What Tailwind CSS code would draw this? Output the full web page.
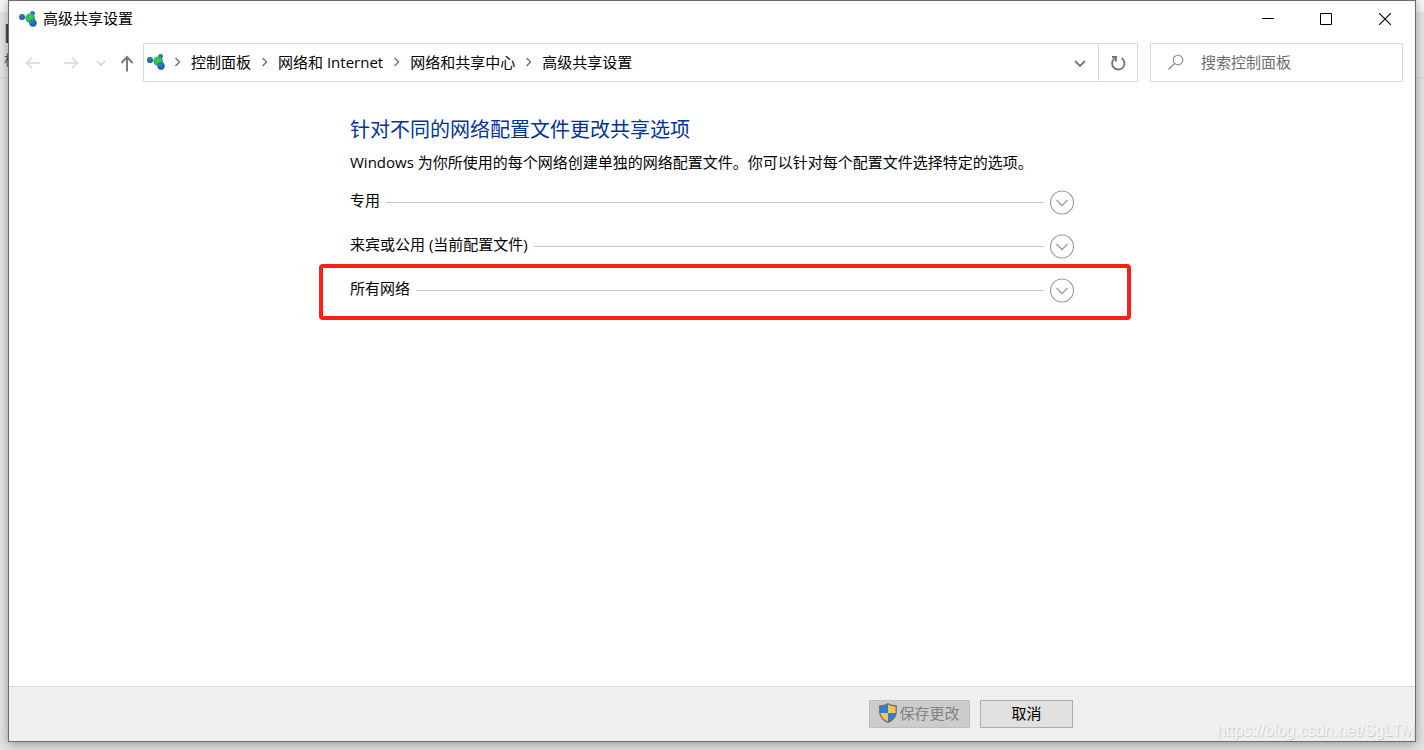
<!DOCTYPE html>
<html lang="zh-CN">
  <head>
    <meta charset="UTF-8" />
    <meta name="viewport" content="width=device-width, initial-scale=1.0" />
    <title>高级共享设置</title>
    <script src="https://cdn.jsdelivr.net/npm/@tailwindcss/browser@4"></script>
  </head>
  <body class="relative flex h-screen flex-col overflow-hidden bg-[#e2e3e5] px-2 pb-2 font-['Open_Sans','Noto_Sans_CJK_SC',sans-serif] text-[15px] leading-5 text-black">
    <svg class="absolute size-0" aria-hidden="true">
      <defs>
        <radialGradient id="blue" cx="40%" cy="35%" r="65%">
          <stop offset="0" stop-color="#2f83cc" />
          <stop offset="1" stop-color="#0f5ba6" />
        </radialGradient>
        <radialGradient id="green" cx="45%" cy="40%" r="65%">
          <stop offset="0" stop-color="#3fd04e" />
          <stop offset="1" stop-color="#27a94a" />
        </radialGradient>
        <symbol id="sharing" viewBox="0 0 18 16">
          <path d="M3 6 11 7" stroke="#b9d3de" stroke-width="1" fill="none" />
          <circle cx="3" cy="6" r="3" fill="url(#blue)" />
          <circle cx="13.5" cy="2.5" r="2.4" fill="url(#blue)" />
          <circle cx="11.2" cy="7.2" r="4.8" fill="url(#green)" />
          <circle cx="14" cy="12" r="3.7" fill="url(#blue)" />
        </symbol>
        <symbol id="chevron" viewBox="0 0 8 10">
          <path d="M1.5 1 5.5 5l-4 4" stroke="#777" stroke-width="1.5" fill="none" />
        </symbol>
        <symbol id="expand" viewBox="0 0 26 26">
          <circle cx="13" cy="13.5" r="11.5" stroke="#999" stroke-width="1.1" fill="#fff" />
          <path d="m7.5 11 5.5 5.500 5.500-5.500" stroke="#a8a8a8" stroke-width="1.7" fill="none" />
        </symbol>
      </defs>
    </svg>

    <!-- Page behind the window -->
    <div class="absolute inset-x-0 top-0 h-[78px] border-b border-[#d2d3d5] bg-[#e6e6e6]" aria-hidden="true">
      <div class="h-3 bg-[#f7f7f7]"></div>
      <div class="w-2 overflow-hidden pl-1 pt-1 font-['Liberation_Sans'] text-[28px] leading-9 font-bold text-[#44444f]">H</div>
      <div class="w-2 overflow-hidden pl-1 text-sm leading-4 text-[#6b5a50]">标</div>
    </div>

    <!-- Window -->
    <div class="relative flex min-h-0 flex-1 flex-col border border-[#6b6b6b] bg-white shadow-[0_2px_10px_rgba(0,0,0,0.35)]">
      <header class="flex h-9 shrink-0 items-center pl-2.5">
        <svg class="mr-1.5 h-4 w-[18px]"><use href="#sharing" /></svg>
        <h1 class="flex-1 pb-0.5">高级共享设置</h1>
        <button class="flex h-9 w-[58px] items-center justify-center" aria-label="最小化">
          <svg class="size-3" viewBox="0 0 12 12"><path d="M0 5.5h12" stroke="#000" /></svg>
        </button>
        <button class="flex h-9 w-[58px] items-center justify-center" aria-label="最大化">
          <svg class="size-3" viewBox="0 0 12 12"><path d="M.5.5h11v11H.5z" stroke="#000" fill="none" /></svg>
        </button>
        <button class="flex h-9 w-[60px] items-center justify-center" aria-label="关闭">
          <svg class="size-3" viewBox="0 0 12 12"><path d="m0 0 12 12M12 0 0 12" stroke="#000" stroke-width="1.1" /></svg>
        </button>
      </header>

      <!-- Navigation -->
      <nav class="mt-1.5 flex shrink-0 items-center pl-4 pr-3">
        <button class="mr-[22px] w-4" aria-label="后退" disabled>
          <svg class="h-4 w-4" viewBox="0 0 16 16"><path d="M15 8H1.5M7 2.5 1.5 8 7 13.5" stroke="#d9d9d9" stroke-width="1.6" fill="none" /></svg>
        </button>
        <button class="mr-4 w-4" aria-label="前进" disabled>
          <svg class="h-4 w-4" viewBox="0 0 16 16"><path d="M1 8h13.5M9 2.5 14.5 8 9 13.5" stroke="#d9d9d9" stroke-width="1.6" fill="none" /></svg>
        </button>
        <button class="mr-3 w-3" aria-label="最近浏览的位置" disabled>
          <svg class="h-3 w-3" viewBox="0 0 12 12"><path d="m2 4 4 4 4-4" stroke="#d2d2d2" stroke-width="1.6" fill="none" /></svg>
        </button>
        <button class="mr-2 w-4" aria-label="上移">
          <svg class="h-[18px] w-4" viewBox="0 0 16 18"><path d="M8 17.5V3M2.5 9 8 3l5.5 6" stroke="#777" stroke-width="1.9" fill="none" /></svg>
        </button>
        <div class="flex h-[39px] flex-1 border border-[#d9d9d9]">
          <div class="flex flex-1 items-center pb-0.5 pl-[3px]">
            <svg class="mr-[9px] h-4 w-[18px]"><use href="#sharing" /></svg>
            <svg class="mr-[9px] h-2.5 w-2"><use href="#chevron" /></svg>
            <a href="#" class="mr-2.5">控制面板</a>
            <svg class="mr-[9px] h-2.5 w-2"><use href="#chevron" /></svg>
            <a href="#" class="mr-2.5">网络和 Internet</a>
            <svg class="mr-[9px] h-2.5 w-2"><use href="#chevron" /></svg>
            <a href="#" class="mr-2.5">网络和共享中心</a>
            <svg class="mr-[9px] h-2.5 w-2"><use href="#chevron" /></svg>
            <a href="#">高级共享设置</a>
          </div>
          <button class="flex w-9 items-center justify-center" aria-label="以前的位置">
            <svg class="size-3" viewBox="0 0 12 12"><path d="m1 4 5 5 5-5" stroke="#777" stroke-width="1.9" fill="none" /></svg>
          </button>
          <button class="flex w-[39px] items-center justify-center border-l border-[#d9d9d9]" aria-label="刷新">
            <svg class="size-4" viewBox="0 0 16 16"><path d="M11.5 3A6.200 6.200 0 1 1 4.800 3.200M2 2h4v4.500" stroke="#777" stroke-width="1.9" fill="none" /></svg>
          </button>
        </div>
        <label class="ml-3 flex h-[39px] w-[253px] items-center border border-[#d9d9d9] pb-0.5 pl-[17px]">
          <svg class="mr-[17px] size-4 shrink-0" viewBox="0 0 16 16"><circle cx="10" cy="6" r="4.8" stroke="#888" stroke-width="1.1" fill="none" /><path d="M6.5 9.5.5 15.5" stroke="#888" stroke-width="1.2" /></svg>
          <input type="search" placeholder="搜索控制面板" aria-label="搜索控制面板" class="w-full min-w-0 outline-none placeholder:text-[#6d6d6d]" />
        </label>
      </nav>

      <!-- Content -->
      <main class="ml-[310px] mr-[284px] flex-1 pt-8">
        <h2 class="pl-[31px] text-xl leading-8 text-[#003399]">针对不同的网络配置文件更改共享选项</h2>
        <p class="mt-1.5 pl-[31px]">Windows 为你所使用的每个网络创建单独的网络配置文件。你可以针对每个配置文件选择特定的选项。</p>
        <button class="mt-2 flex h-11 w-full items-center pl-[31px] pr-14">
          <span class="pb-1">专用</span>
          <span class="ml-1.5 mr-[5px] h-px flex-1 bg-[#c8c8c8]"></span>
          <svg class="size-[26px]"><use href="#expand" /></svg>
        </button>
        <button class="flex h-11 w-full items-center pl-[31px] pr-14">
          <span class="pb-1">来宾或公用 (当前配置文件)</span>
          <span class="ml-1.5 mr-[5px] h-px flex-1 bg-[#c8c8c8]"></span>
          <svg class="size-[26px]"><use href="#expand" /></svg>
        </button>
        <button class="-mt-1 flex h-14 w-full items-center rounded border-4 border-[#ff1f14] pb-1 pl-[27px] pr-[52px]">
          <span class="pb-1">所有网络</span>
          <span class="ml-1.5 mr-[5px] h-px flex-1 bg-[#c8c8c8]"></span>
          <svg class="size-[26px]"><use href="#expand" /></svg>
        </button>
      </main>

      <footer class="relative flex h-[55px] shrink-0 items-center justify-end gap-2.5 border-t border-[#dcdcdc] bg-[#efefef] pr-[342px]">
        <button class="flex h-7 w-[101px] items-center justify-center border border-[#bdbdbd] bg-[#cccccc] pb-0.5 text-[#838383]" disabled>
          <svg class="mr-0.5 h-5 w-[18px]" viewBox="0 0 18 20">
            <path d="M9 .5C7 2 4 3 .7 3v7H9z" fill="#2f7fd0" />
            <path d="M9 .5C11 2 14 3 17.3 3v7H9z" fill="#f8c455" />
            <path d="M.7 10C1.5 14.5 5 17.5 9 19.5V10z" fill="#f8c455" />
            <path d="M17.3 10C16.5 14.5 13 17.5 9 19.5V10z" fill="#2f7fd0" />
            <path d="M9 .8C7 2.3 4 3 .8 3v6c0 5 4 8.5 8.2 10.300C13.200 17.500 17.200 14 17.200 9V3C14 3 11 2.300 9 .8z" stroke="#6d6d6d" stroke-width="1.3" fill="none" />
          </svg>
          保存更改
        </button>
        <button class="h-7 w-[93px] border border-[#adadad] bg-[#e1e1e1] pb-0.5">取消</button>
        <span class="absolute bottom-0 right-0 font-['Liberation_Sans'] text-base leading-5 text-[#f6f6f6] [text-shadow:1px_1px_1px_#c8c8c8]">https://blog.csdn.net/SgLTM</span>
      </footer>
    </div>
  </body>
</html>
